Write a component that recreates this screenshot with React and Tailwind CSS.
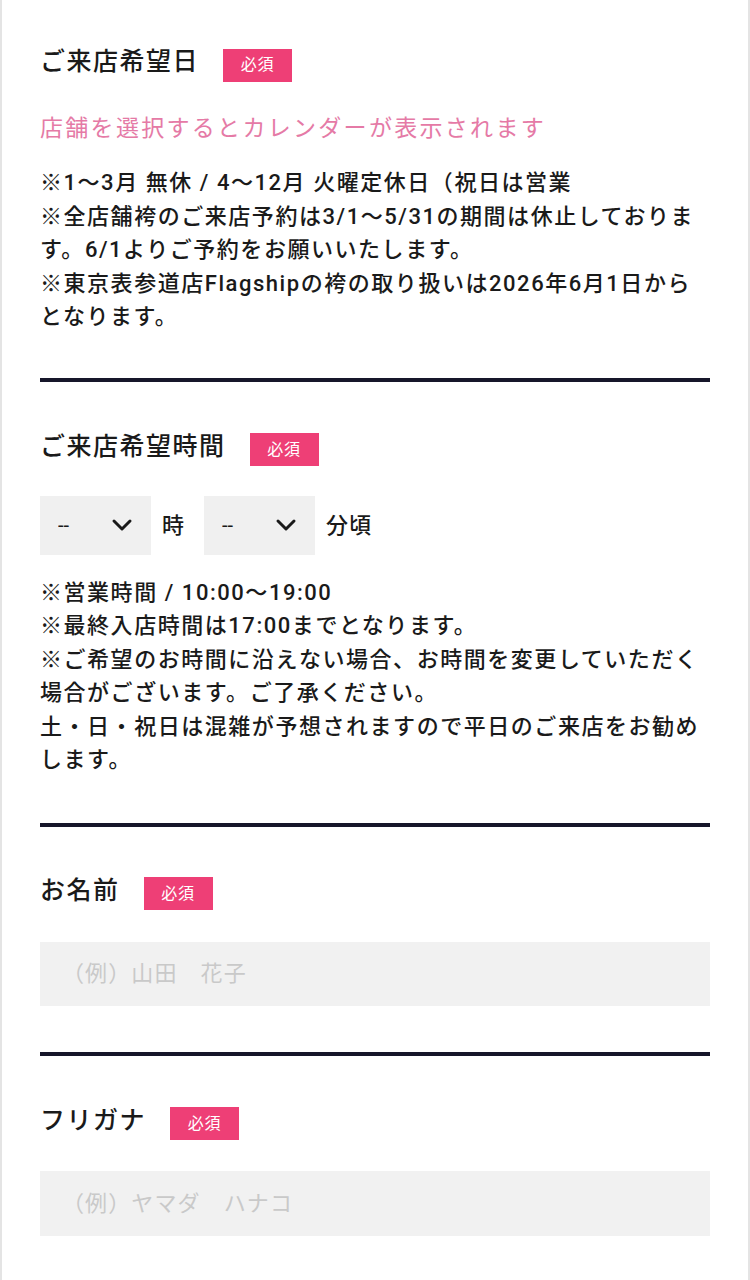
import React, { useState } from 'react';

const FONT = { fontFamily: 'Roboto, "Noto Sans CJK JP", sans-serif' };

// 必須バッジ
function Required() {
  return (
    <span className="inline-flex items-center justify-center w-[69px] h-[33px] bg-[#ee3f76] text-white text-[16px] tracking-[0.05em] translate-y-[3px]">
      必須
    </span>
  );
}

function Heading({ children }) {
  return (
    <div className="flex items-center gap-6 h-[36px]">
      <h2 className="text-[25px] leading-[36px] font-medium tracking-[0.06em] text-[#1a1a1a]">{children}</h2>
      <Required />
    </div>
  );
}

function Divider() {
  return <div className="h-[4px] bg-[#16162a]" />;
}

function TimeSelect({ value, onChange, options }) {
  return (
    <div className="relative w-[111px] h-[59px] bg-[#f0f0f0]">
      <select
        value={value}
        onChange={e => onChange(e.target.value)}
        className="appearance-none w-full h-full bg-transparent pl-[18px] pr-8 text-[20px] text-[#1a1a1a] outline-none"
      >
        <option value="">--</option>
        {options.map(o => (
          <option key={o} value={o}>{o}</option>
        ))}
      </select>
      <svg
        className="pointer-events-none absolute right-[18px] top-1/2 -translate-y-1/2"
        width="22"
        height="14"
        viewBox="0 0 22 14"
        fill="none"
      >
        <path d="M3 3l8 8 8-8" stroke="#1a1a1a" strokeWidth="3" strokeLinecap="round" strokeLinejoin="round" />
      </svg>
    </div>
  );
}

const noteClass = 'text-[22px] leading-[33.5px] font-medium tracking-[0.07em] text-[#1a1a1a]';

export default function App() {
  const [hour, setHour] = useState('');
  const [minute, setMinute] = useState('');
  const [name, setName] = useState('');
  const [kana, setKana] = useState('');

  const hours = ['10', '11', '12', '13', '14', '15', '16', '17'];
  const minutes = ['00', '15', '30', '45'];

  return (
    <div style={FONT} className="min-h-screen bg-white border-x-2 border-[#e4e4e4] px-[38px]">
      {/* ご来店希望日 */}
      <section className="pt-[44px] pb-[44px]">
        <Heading>ご来店希望日</Heading>
        <p className="mt-[32px] text-[23px] leading-[34px] tracking-[0.1em] text-[#e57aa6]">
          店舗を選択するとカレンダーが表示されます
        </p>
        <div className={`mt-[20px] ${noteClass}`}>
          <p>※1〜3月 無休 / 4〜12月 火曜定休日（祝日は営業</p>
          <p>※全店舗袴のご来店予約は3/1〜5/31の期間は休止しております。6/1よりご予約をお願いいたします。</p>
          <p>※東京表参道店Flagshipの袴の取り扱いは2026年6月1日からとなります。</p>
        </div>
      </section>
      <Divider />

      {/* ご来店希望時間 */}
      <section className="pt-[47px] pb-[46px]">
        <Heading>ご来店希望時間</Heading>
        <div className="mt-[31px] flex items-center">
          <TimeSelect value={hour} onChange={setHour} options={hours} />
          <span className="ml-[11px] mr-[20px] text-[22px] font-medium text-[#1a1a1a]">時</span>
          <TimeSelect value={minute} onChange={setMinute} options={minutes} />
          <span className="ml-[11px] text-[22px] font-medium tracking-[0.05em] text-[#1a1a1a]">分頃</span>
        </div>
        <div className={`mt-[21px] ${noteClass}`}>
          <p>※営業時間 / 10:00〜19:00</p>
          <p>※最終入店時間は17:00までとなります。</p>
          <p>※ご希望のお時間に沿えない場合、お時間を変更していただく場合がございます。ご了承ください。</p>
          <p>土・日・祝日は混雑が予想されますので平日のご来店をお勧めします。</p>
        </div>
      </section>
      <Divider />

      {/* お名前 */}
      <section className="pt-[46px] pb-[46px]">
        <Heading>お名前</Heading>
        <input
          type="text"
          value={name}
          onChange={e => setName(e.target.value)}
          placeholder="（例）山田　花子"
          className="mt-[33px] block w-full h-[64px] bg-[#f1f1f1] px-[22px] text-[22px] tracking-[0.05em] text-[#1a1a1a] placeholder:text-[#c9c9c9] outline-none"
        />
      </section>
      <Divider />

      {/* フリガナ */}
      <section className="pt-[47px] pb-[46px]">
        <Heading>フリガナ</Heading>
        <input
          type="text"
          value={kana}
          onChange={e => setKana(e.target.value)}
          placeholder="（例）ヤマダ　ハナコ"
          className="mt-[32px] block w-full h-[65px] bg-[#f1f1f1] px-[22px] text-[22px] tracking-[0.05em] text-[#1a1a1a] placeholder:text-[#c9c9c9] outline-none"
        />
      </section>
    </div>
  );
}
